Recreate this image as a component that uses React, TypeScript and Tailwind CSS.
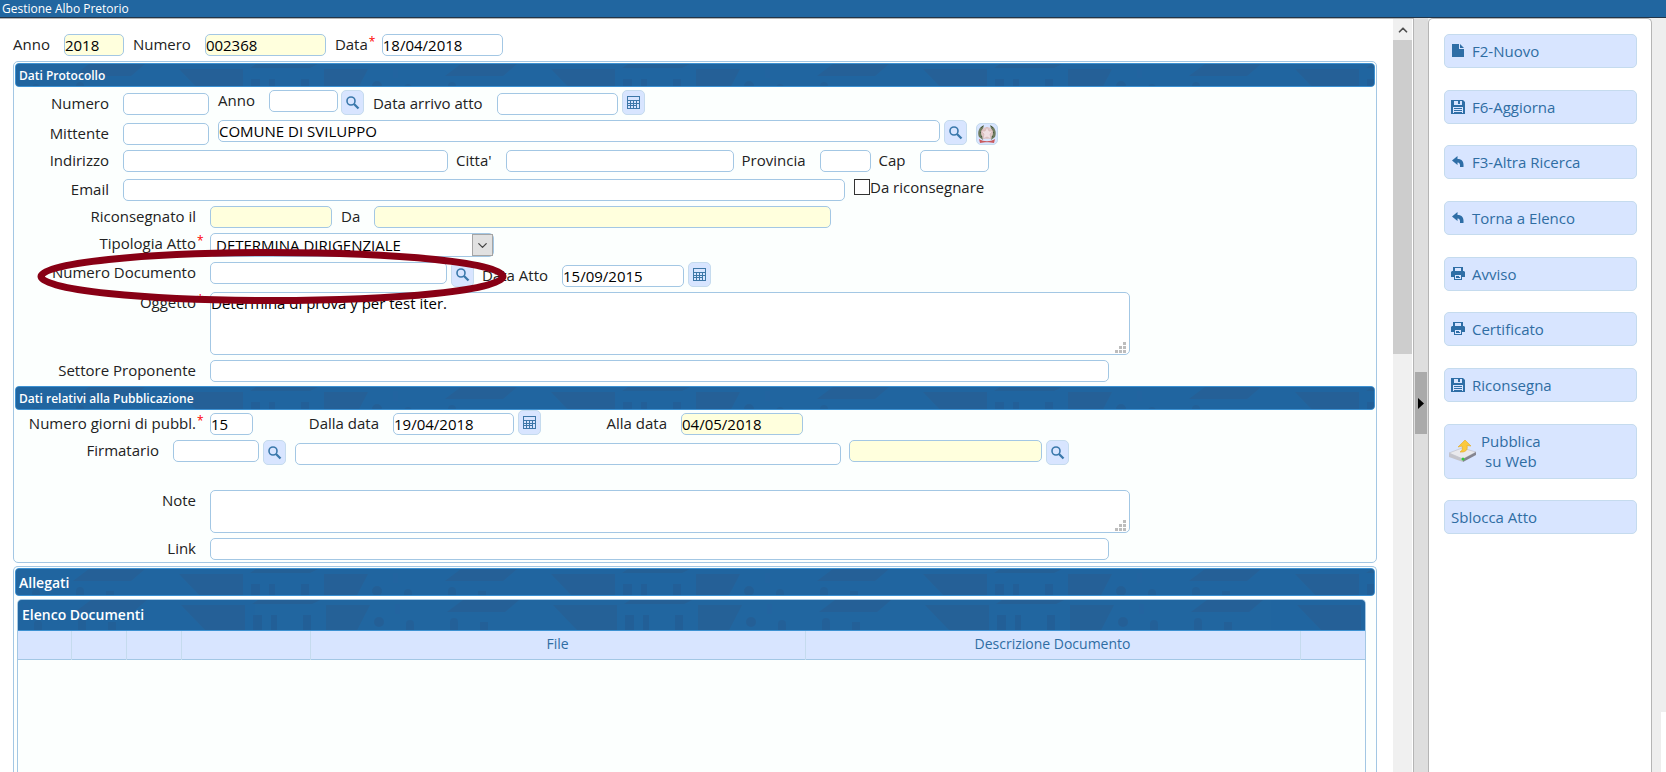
import { useId } from 'react';
import type { ReactNode } from 'react';
import clsx from 'clsx';
import { ChevronDown, ChevronUp } from 'lucide-react';

function HeaderTexture() {
  const id = useId();
  return (
    <svg className="absolute inset-0 h-full w-full opacity-80" aria-hidden="true">
      <defs>
        <pattern id={id} width="372" height="32" patternUnits="userSpaceOnUse">
          <rect width="372" height="32" fill="#2166a0" />
          <path d="M73 0h56l-14 12h-58z" fill="#275f95" />
          <path d="M163 5h64v27h-38z" fill="#276095" />
          <path d="M240 0h62l-8 4h-60z" fill="#265f94" />
          <path d="M308 5h44l-14 27h-30z" fill="#276095" />
          <path d="M235 15h9v17h-9zM253 15h6v17h-6zM285 15h8v17h-8z" fill="#235e96" />
          <circle cx="361" cy="22" r="5" fill="#255e94" />
          <path d="M16 24a4 4 0 0 1 8 0v8h-8zM60 22a4 4 0 0 1 8 0v10h-8zM90 22h8v10h-8z" fill="#245f97" />
          <path d="M5 4h5v10h-5z" fill="#2464a0" />
        </pattern>
      </defs>
      <rect width="100%" height="100%" fill={`url(#${id})`} />
    </svg>
  );
}

function SectionHeader({ children, large }: { children: ReactNode; large?: boolean }) {
  return (
    <div
      className={clsx(
        'relative mx-px flex items-center overflow-hidden rounded-[4px] border border-[#3d91d2] bg-[#2166a0] pt-0.5 font-semibold text-white',
        large ? 'h-7 px-[3px] text-sm' : 'h-6 px-[3px] text-xs'
      )}
    >
      <HeaderTexture />
      <h2 className="relative">{children}</h2>
    </div>
  );
}

type FieldProps = {
  label: string;
  value?: string;
  width: string;
  labelWidth?: string;
  required?: boolean;
  readOnly?: boolean;
  top?: boolean;
};

const boxClass =
  'rounded-[5px] border border-[#a3c7e4] p-0 text-[15px] leading-5 text-black outline-none';

function Label({ id, label, labelWidth, required }: { id: string; label: string; labelWidth?: string; required?: boolean }) {
  return (
    <label htmlFor={id} className={clsx('flex shrink-0 justify-end whitespace-nowrap leading-5', labelWidth)}>
      {label}
      <span className="w-3.5 pl-px text-xs leading-4 text-[#f00]">{required ? '*' : ''}</span>
    </label>
  );
}

function Field({ label, value, width, labelWidth, required, readOnly, top }: FieldProps) {
  const id = useId();
  return (
    <div className={clsx('flex h-[22px] shrink-0', top ? 'self-start' : 'self-end')}>
      <Label id={id} label={label} labelWidth={labelWidth} required={required} />
      <input
        id={id}
        type="text"
        defaultValue={value}
        readOnly={readOnly}
        className={clsx(boxClass, 'h-[22px]', width, readOnly ? 'bg-[#ffffdd]' : 'bg-white')}
      />
    </div>
  );
}

function Row({ children, className }: { children: ReactNode; className?: string }) {
  return <div className={clsx('flex', className)}>{children}</div>;
}

function IconButton({ label, children }: { label: string; children: ReactNode }) {
  return (
    <button
      type="button"
      aria-label={label}
      className="flex h-[25px] w-[23px] shrink-0 items-center justify-center rounded-[5px] border border-[#c5dbee] bg-[#d8e5ff]"
    >
      {children}
    </button>
  );
}

function SearchButton() {
  return (
    <IconButton label="Cerca">
      <svg width="15" height="15" viewBox="0 0 15 15" fill="none" stroke="#3a78ab">
        <circle cx="6" cy="6" r="4" strokeWidth="1.6" />
        <path d="M9 9l4.500 4.500" strokeWidth="2.3" />
      </svg>
    </IconButton>
  );
}

function CalendarButton() {
  return (
    <IconButton label="Calendario">
      <svg width="13" height="13" viewBox="0 0 13 13" fill="none">
        <path d="M0 0h13v13H0z" fill="#3d77a8" />
        <path
          d="M1 1h11v3H1zM1 5h2v2H1zM4 5h2v2H4zM7 5h2v2H7zM10 5h2v2h-2zM1 8h2v1H1zM4 8h2v1H4zM7 8h2v1H7zM1 10h2v2H1zM4 10h2v2H4zM10 8h2v4h-2zM7 10h2v2H7z"
          fill="#d8e5ff"
        />
      </svg>
    </IconButton>
  );
}

function EmblemIcon() {
  return (
    <svg width="20" height="20" viewBox="0 0 20 20">
      <path d="M7 1C2 3 0 8 2 13l4 3-1-7zM13 1c5 2 7 7 5 12l-4 3 1-7z" fill="#6f7c5f" />
      <path d="M4 4l2-2M3 9l3-2M4 13l3-2M16 4l-2-2M17 9l-3-2M16 13l-3-2" stroke="#46553c" />
      <circle cx="10" cy="9" r="6" fill="#e0c6c6" />
      <path d="M10 3l2 4h4l-3 3 1 5-4-2-4 2 1-5-3-3h4z" fill="#efdfe2" stroke="#d2b0b0" strokeWidth=".6" />
      <path d="M2 15c5 3 11 3 16 0l-1 4c-4-1-10-1-14 0z" fill="#c95a5e" />
    </svg>
  );
}

function TextBlock({ id, value, height }: { id: string; value?: string; height: string }) {
  return (
    <div className="relative w-[920px]">
      <textarea
        id={id}
        defaultValue={value}
        className={clsx(boxClass, 'block w-full resize-none overflow-hidden bg-white', height)}
      />
      <svg className="absolute right-1 bottom-0.5" width="11" height="11" viewBox="0 0 11 11" fill="#bdbdbd">
        <path d="M8 0h3v3H8zM4 4h3v3H4zM8 4h3v3H8zM0 8h3v3H0zM4 8h3v3H4zM8 8h3v3H8z" />
      </svg>
    </div>
  );
}

const FileIcon = () => (
  <svg width="14" height="14" viewBox="0 0 14 14" fill="#2e6ea6">
    <path d="M1 0h7v5h5v8H1zM9 0l4 4H9z" />
  </svg>
);

const SaveIcon = () => (
  <svg width="14" height="14" viewBox="0 0 14 14">
    <path d="M0 0h12l2 2v12H0z" fill="#2e6ea6" />
    <path d="M3 1h8v4H3zM2 7h10v6H2z" fill="#d8e5ff" />
    <path d="M7 1h2v3H7zM3 8h8v1H3zM3 10h8v1H3zM3 12h8v1H3z" fill="#2e6ea6" />
  </svg>
);

const BackIcon = () => (
  <svg width="14" height="14" viewBox="0 0 14 14" fill="#2e6ea6">
    <path d="M1 5.500L6.500 1v3c4.500 0 6.500 2.500 6 8H9c.3-3-.4-4.500-2.500-4.500V10z" />
  </svg>
);

const PrintIcon = () => (
  <svg width="14" height="14" viewBox="0 0 14 14">
    <path d="M2 0h10v4h1l1 1v5h-3v3H3v-3H0V5l1-1h1z" fill="#2e6ea6" />
    <path d="M4 1h6v3H4zM4 8h6v4H4z" fill="#d8e5ff" />
    <path d="M5 9h3v1H5zM5 10h4v1H5z" fill="#2e6ea6" />
  </svg>
);

const PublishIcon = () => (
  <svg width="29" height="23" viewBox="0 0 29 23">
    <path d="M1 14l13-5 14 4-13 7z" fill="#e9e9ed" stroke="#bcbcc4" strokeWidth=".6" />
    <path d="M1 14l14 6v3L1 18z" fill="#c4c4cb" />
    <path d="M15 20l13-7v3l-13 7z" fill="#85858f" />
    <circle cx="15" cy="20" r="1.500" fill="#35c93f" />
    <path d="M12 13c2-1 3-3 2-6l-4 1 7-7 6 6-4-.5c1 4-1 6-4 6.500z" fill="#fbc93d" stroke="#e3a923" strokeWidth=".6" />
  </svg>
);

const actions = [
  { label: 'F2-Nuovo', icon: <FileIcon /> },
  { label: 'F6-Aggiorna', icon: <SaveIcon /> },
  { label: 'F3-Altra Ricerca', icon: <BackIcon /> },
  { label: 'Torna a Elenco', icon: <BackIcon /> },
  { label: 'Avviso', icon: <PrintIcon /> },
  { label: 'Certificato', icon: <PrintIcon /> },
  { label: 'Riconsegna', icon: <SaveIcon /> },
];

const actionClass =
  'flex w-full items-center rounded-[5px] border border-[#c5dbee] bg-[#d8e5ff] text-[15px] leading-5 text-[#2f6da3]';

function Highlight() {
  return (
    <svg className="pointer-events-none absolute top-[187px] left-[23px]" width="470" height="56" viewBox="0 0 470 56">
      <ellipse cx="235" cy="27.500" rx="231" ry="24" fill="none" stroke="#880015" strokeWidth="7" />
    </svg>
  );
}

function ProtocolForm() {
  const id = useId();
  return (
    <section className="relative rounded-[5px] border border-[#a3c7e4] bg-[#fcfffe] pt-px pb-0.5">
      <SectionHeader>Dati Protocollo</SectionHeader>
      <div className="flex flex-col gap-[5px] pt-[3px] pb-1">
        <Row>
          <Field label="Numero" labelWidth="w-[109px]" width="w-[86px]" />
          <div className="ml-[9px] flex">
            <Field label="Anno" width="w-[69px]" top />
          </div>
          <div className="mr-[9px] ml-[3px]">
            <SearchButton />
          </div>
          <Field label="Data arrivo atto" width="w-[121px]" />
          <div className="ml-1">
            <CalendarButton />
          </div>
        </Row>
        <Row>
          <Field label="Mittente" labelWidth="w-[109px]" width="w-[86px]" />
          <input
            type="text"
            aria-label="Denominazione mittente"
            defaultValue="COMUNE DI SVILUPPO"
            className={clsx(boxClass, 'ml-[9px] mr-1 h-[22px] w-[722px] bg-white')}
          />
          <SearchButton />
          <button
            type="button"
            aria-label="Comune"
            className="ml-[9px] flex h-[22px] w-[22px] items-center justify-center self-end rounded-[5px] border border-[#c5dbee] bg-[#d8e5ff]"
          >
            <EmblemIcon />
          </button>
        </Row>
        <Row className="gap-2">
          <Field label="Indirizzo" labelWidth="w-[109px]" width="w-[325px]" />
          <Field label="Citta'" width="w-[228px]" />
          <Field label="Provincia" width="w-[51px]" />
          <Field label="Cap" width="w-[69px]" />
        </Row>
        <Row className="h-6 gap-[9px]">
          <Field label="Email" labelWidth="w-[109px]" width="w-[722px]" />
          <label className="flex h-[22px] self-end leading-4">
            <input type="checkbox" className="h-4 w-4 appearance-none border border-[#333] bg-white" />
            Da riconsegnare
          </label>
        </Row>
        <Row className="gap-[9px]">
          <Field label="Riconsegnato il" labelWidth="w-[196px]" width="w-[122px]" readOnly />
          <Field label="Da" width="w-[457px]" readOnly />
        </Row>
        <Row>
          <Label id={`${id}tipo`} label="Tipologia Atto" labelWidth="w-[196px]" required />
          <div className="relative">
            <select
              id={`${id}tipo`}
              className="block h-6 w-[284px] appearance-none rounded-[5px] border border-[#a3c7e4] bg-white px-[5px] text-[15px] leading-[22px] text-black"
            >
              <option>DETERMINA DIRIGENZIALE</option>
            </select>
            <span className="pointer-events-none absolute top-px right-px flex h-[22px] w-[21px] items-center justify-center border border-[#a5a5a5] bg-[#e1e1e1]">
              <ChevronDown size={15} strokeWidth={2} color="#444" />
            </span>
          </div>
        </Row>
        <Row>
          <Field label="Numero Documento" labelWidth="w-[196px]" width="w-[237px]" top />
          <div className="mr-2 ml-1">
            <SearchButton />
          </div>
          <Field label="Data Atto" width="w-[122px]" value="15/09/2015" />
          <div className="ml-1">
            <CalendarButton />
          </div>
        </Row>
        <Row>
          <Label id={`${id}oggetto`} label="Oggetto" labelWidth="w-[196px]" required />
          <TextBlock id={`${id}oggetto`} value="Determina di prova y per test iter." height="h-[63px]" />
        </Row>
        <Row>
          <Field label="Settore Proponente" labelWidth="w-[196px]" width="w-[899px]" />
        </Row>
      </div>
      <SectionHeader>Dati relativi alla Pubblicazione</SectionHeader>
      <div className="flex flex-col gap-[5px]">
        <Row>
          <Field label="Numero giorni di pubbl." labelWidth="w-[196px]" width="w-[43px]" value="15" required />
          <Field label="Dalla data" labelWidth="w-[140px]" width="w-[121px]" value="19/04/2018" />
          <div className="ml-1">
            <CalendarButton />
          </div>
          <Field label="Alla data" labelWidth="w-[140px]" width="w-[122px]" value="04/05/2018" readOnly />
        </Row>
        <Row>
          <Field label="Firmatario" labelWidth="w-[159px]" width="w-[86px]" top />
          <div className="mr-[9px] ml-1">
            <SearchButton />
          </div>
          <input
            type="text"
            aria-label="Nome firmatario"
            className={clsx(boxClass, 'mr-2 h-[22px] w-[546px] self-end bg-white')}
          />
          <input
            type="text"
            aria-label="Qualifica firmatario"
            readOnly
            className={clsx(boxClass, 'mr-1 h-[22px] w-[193px] bg-[#ffffdd]')}
          />
          <SearchButton />
        </Row>
        <Row className="pt-5">
          <Label id={`${id}note`} label="Note" labelWidth="w-[196px]" />
          <TextBlock id={`${id}note`} height="h-[43px]" />
        </Row>
        <Row>
          <Field label="Link" labelWidth="w-[196px]" width="w-[899px]" />
        </Row>
      </div>
      <Highlight />
    </section>
  );
}

function Attachments() {
  return (
    <section className="flex flex-1 flex-col rounded-t-[5px] border border-b-0 border-[#a3c7e4] bg-[#fcfffe] pt-px">
      <SectionHeader large>Allegati</SectionHeader>
      <div className="mt-[3px] mr-2.5 ml-[3px] flex-1 overflow-hidden rounded-t-[5px] border border-b-0 border-[#a3c7e4]">
        <div className="relative flex h-[31px] items-center border-b border-[#3d91d2] bg-[#2166a0] px-1 text-sm font-semibold text-white">
          <HeaderTexture />
          <h3 className="relative">Elenco Documenti</h3>
        </div>
        <table className="w-full table-fixed border-collapse text-sm leading-5 text-[#2f6da3]">
          <thead>
            <tr className="h-7 border-b border-[#a3c7e4] bg-[#d8e5ff]">
              <th className="w-[53px] border-r border-[#c5dbee]" />
              <th className="w-[55px] border-r border-[#c5dbee]" />
              <th className="w-[55px] border-r border-[#c5dbee]" />
              <th className="w-[129px] border-r border-[#c5dbee]" />
              <th className="border-r border-[#c5dbee] p-0 pb-0.5 font-normal">File</th>
              <th className="border-r border-[#c5dbee] p-0 pb-0.5 font-normal">Descrizione Documento</th>
              <th className="w-[65px]" />
            </tr>
          </thead>
        </table>
      </div>
    </section>
  );
}

export default function App() {
  return (
    <div className="flex h-screen flex-col overflow-hidden bg-[#eee] font-['Open_Sans','Noto_Sans',sans-serif] text-[15px] text-[#222]">
      <header className="flex h-[18px] shrink-0 items-end border-b border-[#223548] bg-[#2166a0] px-0.5 text-xs leading-4 text-white">
        Gestione Albo Pretorio
      </header>
      <div className="flex min-h-0 flex-1">
        <main className="flex min-w-0 flex-1 border-t border-r border-[#b5b5b5] bg-white">
          <div className="flex min-w-0 flex-1 flex-col overflow-hidden pt-[15px] pr-4 pl-[13px]">
            <Row className="mb-[5px] shrink-0 gap-[9px]">
              <Field label="Anno" width="w-[60px]" value="2018" readOnly />
              <Field label="Numero" width="w-[121px]" value="002368" readOnly />
              <Field label="Data" width="w-[121px]" value="18/04/2018" required />
            </Row>
            <div className="flex min-h-0 flex-1 flex-col gap-[3px]">
              <ProtocolForm />
              <Attachments />
            </div>
          </div>
          <div className="mr-px flex w-[19px] flex-col bg-[#f0f0f0]" aria-hidden="true">
            <div className="flex h-[21px] items-center justify-center">
              <ChevronUp size={14} strokeWidth={3} color="#505050" />
            </div>
            <div className="h-[314px] bg-[#cdcdcd]" />
          </div>
        </main>
        <div className="flex w-3.5 flex-col items-center justify-center bg-[#dedede] pt-4">
          <button
            type="button"
            aria-label="Comprimi pannello"
            className="flex h-[62px] w-3 items-center justify-center bg-[#aaa]"
          >
            <svg width="6" height="11" viewBox="0 0 6 11">
              <path d="M0 0l6 5.500L0 11z" />
            </svg>
          </button>
        </div>
        <aside className="flex w-56 shrink-0 flex-col rounded-t-[5px] border border-b-0 border-[#b5b5b5] bg-white pt-[15px] pr-3.5 pl-[15px]">
          <div className="flex h-[368px] flex-col justify-between">
            {actions.map((action) => (
              <button key={action.label} type="button" className={clsx(actionClass, 'h-[34px] gap-[7px] px-1.5')}>
                {action.icon}
                {action.label}
              </button>
            ))}
          </div>
          <button type="button" className={clsx(actionClass, 'mt-[22px] mb-[21px] h-[55px] gap-1 px-[3px] pb-0.5')}>
            <PublishIcon />
            <span className="text-center">
              Pubblica
              <br />
              su Web
            </span>
          </button>
          <button type="button" className={clsx(actionClass, 'h-[34px] px-1.5')}>
            Sblocca Atto
          </button>
        </aside>
        <div className="flex w-3.5 flex-col items-end justify-end">
          <div className="h-[60px] w-[5px] bg-white" />
        </div>
      </div>
    </div>
  );
}
